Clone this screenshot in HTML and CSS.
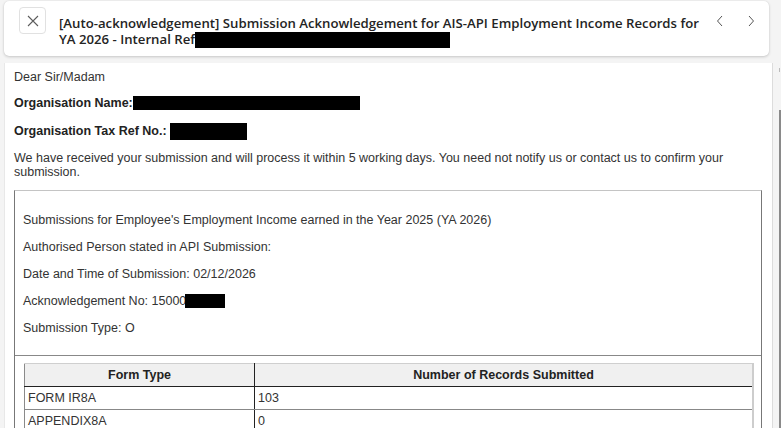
FILE: index.html
```html
<!DOCTYPE html>
<html lang="en">
<head>
<meta charset="utf-8">
<title>Submission Acknowledgement</title>
<link rel="stylesheet" href="styles.css">
</head>
<body>
<div class="app">
  <header class="card">
    <button class="close" aria-label="Close">
      <svg width="12" height="12" viewBox="0 0 12 12"><path d="M1 1L11 11M11 1L1 11" stroke="#5c5c5c" stroke-width="1.1" fill="none"/></svg>
    </button>
    <h1 class="title">[Auto-acknowledgement] Submission Acknowledgement for AIS-API Employment Income Records for YA 2026 - Internal Ref<span class="redact r-title"></span></h1>
    <div class="nav">
      <button class="navbtn" aria-label="Previous">
        <svg width="8" height="12" viewBox="0 0 8 12"><path d="M6 1L1.5 6L6 11" stroke="#555" stroke-width="1" fill="none"/></svg>
      </button>
      <button class="navbtn" aria-label="Next">
        <svg width="8" height="12" viewBox="0 0 8 12"><path d="M2 1L6.5 6L2 11" stroke="#555" stroke-width="1" fill="none"/></svg>
      </button>
    </div>
  </header>
  <div class="reading">
    <main class="message">
      <p class="greet">Dear Sir/Madam</p>
      <p class="label l-org">Organisation Name:<span class="redact r-org"></span></p>
      <p class="label l-tax">Organisation Tax Ref No.:&nbsp;<span class="redact r-tax"></span></p>
      <p class="intro">We have received your submission and will process it within 5 working days. You need not notify us or contact us to confirm your submission.</p>
      <div class="box">
        <div class="info">
          <p>Submissions for Employee's Employment Income earned in the Year 2025 (YA 2026)</p>
          <p>Authorised Person stated in API Submission:</p>
          <p>Date and Time of Submission: 02/12/2026</p>
          <p class="ack">Acknowledgement No: 15000<span class="redact r-ack"></span></p>
          <p>Submission Type: O</p>
        </div>
        <div class="records">
          <table class="rec">
            <thead>
              <tr><th class="c1">Form Type</th><th>Number of Records Submitted</th></tr>
            </thead>
            <tbody>
              <tr><td class="c1">FORM IR8A</td><td>103</td></tr>
              <tr><td class="c1">APPENDIX8A</td><td>0</td></tr>
            </tbody>
          </table>
        </div>
      </div>
    </main>
    <div class="scroll"><div class="tick"></div><div class="thumb"></div></div>
  </div>
</div>
</body>
</html>
```
FILE: styles.css
```css
* { box-sizing: border-box; }
html, body { margin: 0; padding: 0; height: 100%; overflow: hidden; }
body {
  background: #f4f4f4;
  font-family: "Liberation Sans", Arial, sans-serif;
}
.app {
  display: flex;
  flex-direction: column;
  height: 428px;
}
.card {
  display: flex;
  align-items: flex-start;
  margin: 1px 12px 0 4px;
  height: 55px;
  background: #fff;
  border-radius: 5px;
  box-shadow: 0 1px 3px rgba(0,0,0,0.18), 0 0 1px rgba(0,0,0,0.12);
  padding: 6px 0 0 15px;
}
.close {
  width: 27px;
  height: 27px;
  border: 1px solid #e1e1e1;
  border-radius: 4px;
  background: #fff;
  display: flex;
  align-items: center;
  justify-content: center;
  padding: 0;
  flex: none;
}
.title {
  flex: 1;
  margin: 8px 0 0 13px;
  font-family: "Open Sans", "Noto Sans", sans-serif;
  font-weight: 600;
  font-size: 13.2px;
  line-height: 16px;
  color: #242424;
}
.redact {
  display: inline-block;
  background: #000;
  vertical-align: middle;
  flex: none;
}
.r-title { width: 255px; height: 16px; vertical-align: -4px; }
.nav {
  display: flex;
  gap: 3px;
  margin: 0 4px 0 6px;
  flex: none;
}
.navbtn {
  width: 28px;
  height: 28px;
  border: 0;
  background: transparent;
  padding: 0;
  display: flex;
  align-items: center;
  justify-content: center;
}
.reading {
  flex: 1;
  display: flex;
  margin-top: 7px;
  min-height: 0;
}
.message {
  width: 769px;
  margin-left: 4px;
  background: #fff;
  border-left: 1px solid #e8e8e8;
  border-right: 1px solid #dcdcdc;
  padding: 7px 10px 0 9px;
  font-size: 12.5px;
  line-height: 14px;
  color: #333;
  overflow: hidden;
}
.message p { margin: 0; }
.label {
  font-weight: bold;
  color: #222;
  display: flex;
  align-items: center;
  height: 14px;
}
.l-org { margin-top: 12px !important; }
.l-tax { margin-top: 14px !important; }
.intro { margin-top: 13px !important; }
.r-org { width: 227px; height: 14px; }
.r-tax { width: 77px; height: 17px; }
.ack { display: flex; align-items: center; height: 14px; }
.r-ack { width: 40px; height: 14px; margin-left: -1px; }
.box {
  border: 1px solid #777;
  border-top-color: #c4c4c4;
  margin-top: 11px;
}
.info {
  padding: 10px 8px 7px 8px;
  border-bottom: 1px solid #888;
}
.info p { margin: 13px 0 !important; }
.info p:first-child { margin-top: 12px !important; }
.records {
  padding: 7px 8px 10px 9px;
}
.rec {
  width: 730px;
  border-collapse: collapse;
  border-top: 1px solid #cfcfcf;
  border-left: 1px solid #8a8a8a;
  border-right: 2px solid #cdcdcd;
  color: #333;
}
.rec th, .rec td {
  height: 23px;
  padding: 0 3px;
  font-size: 12.5px;
  text-align: left;
}
.rec th {
  background: #f0f0f0;
  font-weight: bold;
  text-align: center;
  border-bottom: 1px solid #222;
  color: #222;
}
.rec td { border-bottom: 1px solid #888; }
.rec .c1 { width: 230px; border-right: 1px solid #222; }
.scroll {
  width: 8px;
  display: flex;
  flex-direction: column;
  align-items: flex-end;
}
.tick {
  width: 1px;
  height: 4px;
  background: #bbb;
  margin: 5px 1px 0 0;
}
.thumb {
  width: 2px;
  flex: 1;
  background: #8a8a8a;
  margin-top: 38px;
}
```
